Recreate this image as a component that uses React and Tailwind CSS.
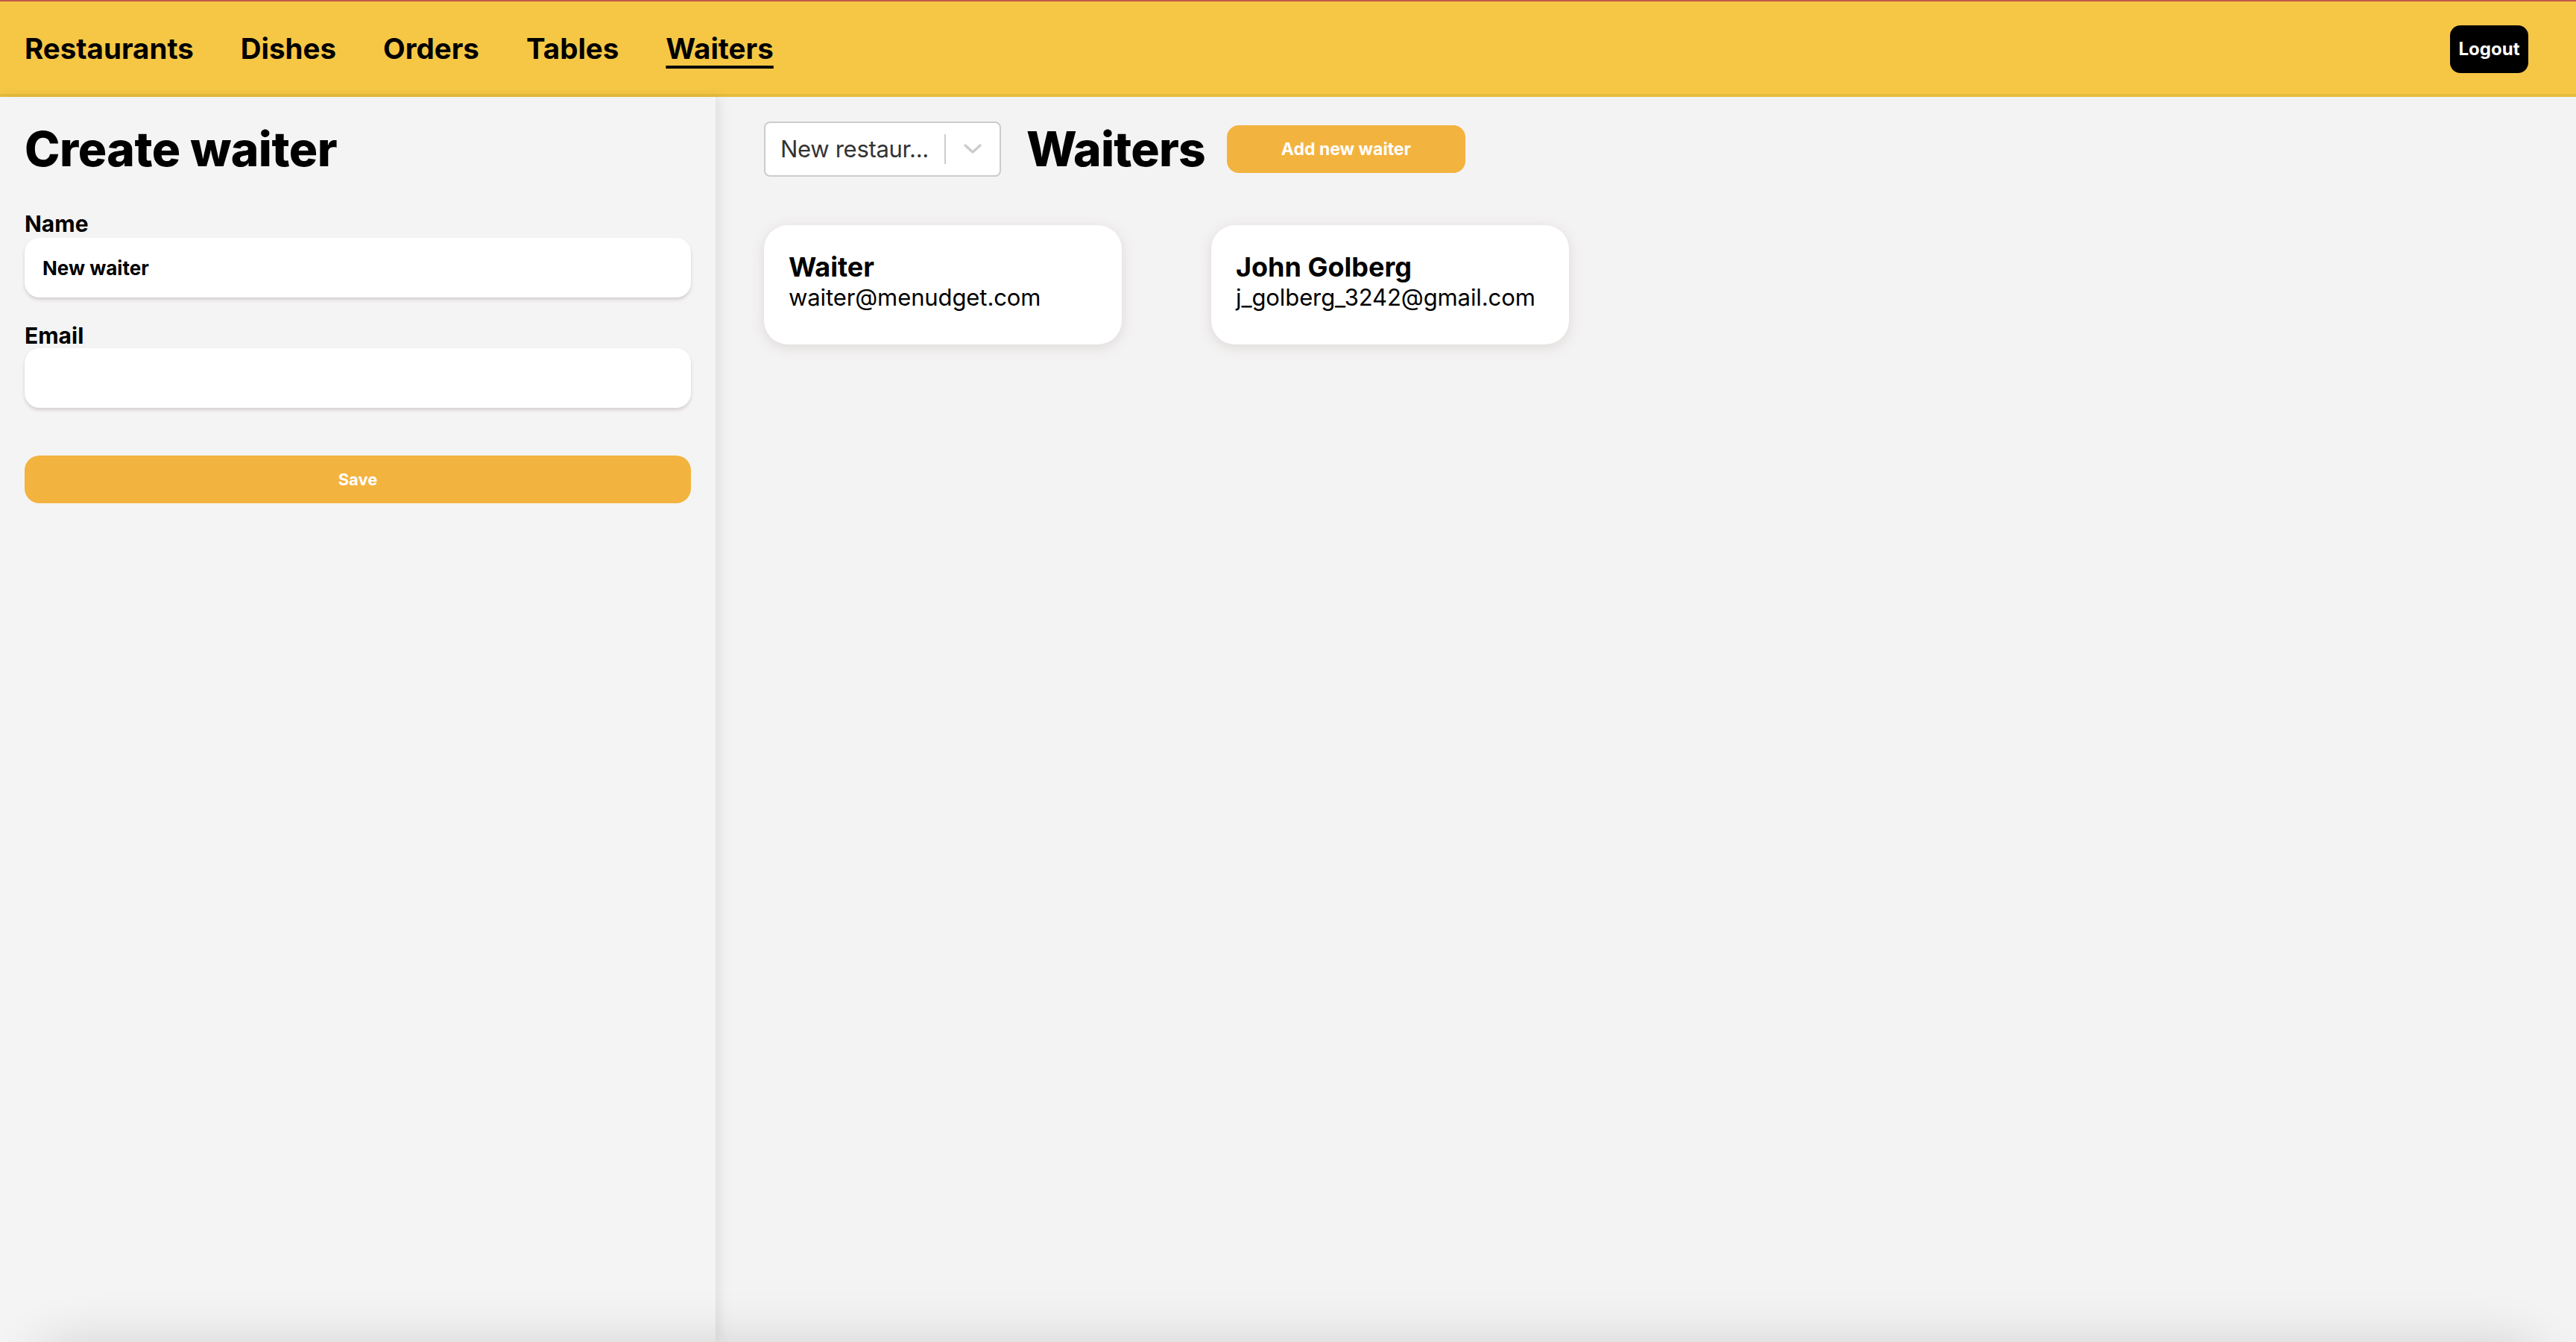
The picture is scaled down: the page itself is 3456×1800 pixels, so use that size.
import React from "react";

const font = { fontFamily: "Inter, 'Noto Sans', sans-serif" };

function Card({ name, email }) {
  return (
    <div className="w-[480px] h-[160px] rounded-[32px] bg-white pt-[34px] px-[33px] shadow-[0_4px_18px_rgba(110,80,80,0.16)]">
      <div className="text-[36px] font-bold leading-[normal] text-black">{name}</div>
      <div className="text-[31px] leading-[normal] text-black tracking-[-0.1px]">{email}</div>
    </div>
  );
}

export default function App() {
  return (
    <div style={font} className="w-[3456px] min-h-[1800px] bg-[#f4f3f3] text-black">
      <header className="h-[130px] border-t-[2px] border-b-[4px] border-t-[#c1584a] border-b-[#e5bd3d] bg-[#f5c745] flex items-center justify-between pl-[33px] pr-[64px] pt-[4px]">
        <nav className="flex items-center gap-[63px] text-[38.5px] font-bold">
          <span>Restaurants</span>
          <span>Dishes</span>
          <span>Orders</span>
          <span>Tables</span>
          <span className="underline decoration-[4px] underline-offset-[9px]">Waiters</span>
        </nav>
        <button className="h-[64px] w-[105px] rounded-[14px] bg-black text-white text-[24px] font-bold">Logout</button>
      </header>
      <main className="flex h-[1670px]">
        <section className="relative z-10 w-[960px] shrink-0 bg-[#f4f4f4] px-[33px] pt-[33px] shadow-[6px_0_14px_rgba(90,60,60,0.10)]">
          <h1 className="h-[74px] flex items-center text-[64px] font-extrabold tracking-[-0.5px]">Create waiter</h1>
          <label className="block mt-[45px] text-[30px] font-bold leading-[36px]">Name</label>
          <div className="mt-[1px] h-[80px] rounded-[20px] bg-white flex items-center px-[24px] text-[26px] font-bold shadow-[0_3px_4px_rgba(110,80,80,0.22)]">New waiter</div>
          <label className="block mt-[33px] text-[30px] font-bold leading-[36px]">Email</label>
          <div className="mt-[-1px] h-[80px] rounded-[20px] bg-white shadow-[0_3px_4px_rgba(110,80,80,0.22)]"></div>
          <button className="mt-[64px] w-full h-[64px] rounded-[20px] bg-[#f3b33f] text-white text-[22px] font-bold">Save</button>
        </section>
        <section className="flex-1 px-[65px] pt-[33px]">
          <div className="flex items-center h-[74px]">
            <div className="w-[318px] h-[74px] rounded-[8px] border-[2px] border-[#cccccc] bg-white flex items-center">
              <span className="flex-1 pl-[20px] text-[31px] tracking-[-0.3px] text-[#333333]">New restaur...</span>
              <span className="w-[2px] h-[40px] bg-[#cccccc]"></span>
              <span className="w-[72px] flex items-center justify-center">
                <svg width="26" height="16" viewBox="0 0 26 16" fill="none">
                  <path d="M3 3 L13 12 L23 3" stroke="#cccccc" strokeWidth="3.5" strokeLinecap="round" strokeLinejoin="round" />
                </svg>
              </span>
            </div>
            <h2 className="ml-[34px] text-[64px] font-extrabold tracking-[-0.8px]">Waiters</h2>
            <button className="ml-[29px] w-[320px] h-[64px] rounded-[16px] bg-[#f3b33f] text-white text-[23px] font-bold">Add new waiter</button>
          </div>
          <div className="mt-[65px] flex gap-[120px]">
            <Card name="Waiter" email="waiter@menudget.com" />
            <Card name="John Golberg" email="j_golberg_3242@gmail.com" />
          </div>
        </section>
      </main>
      <div className="relative z-20 mx-[40px] h-[120px] rounded-[80px] bg-[#f4f3f3] shadow-[0_0_70px_rgba(0,0,0,0.14)]"></div>
    </div>
  );
}
